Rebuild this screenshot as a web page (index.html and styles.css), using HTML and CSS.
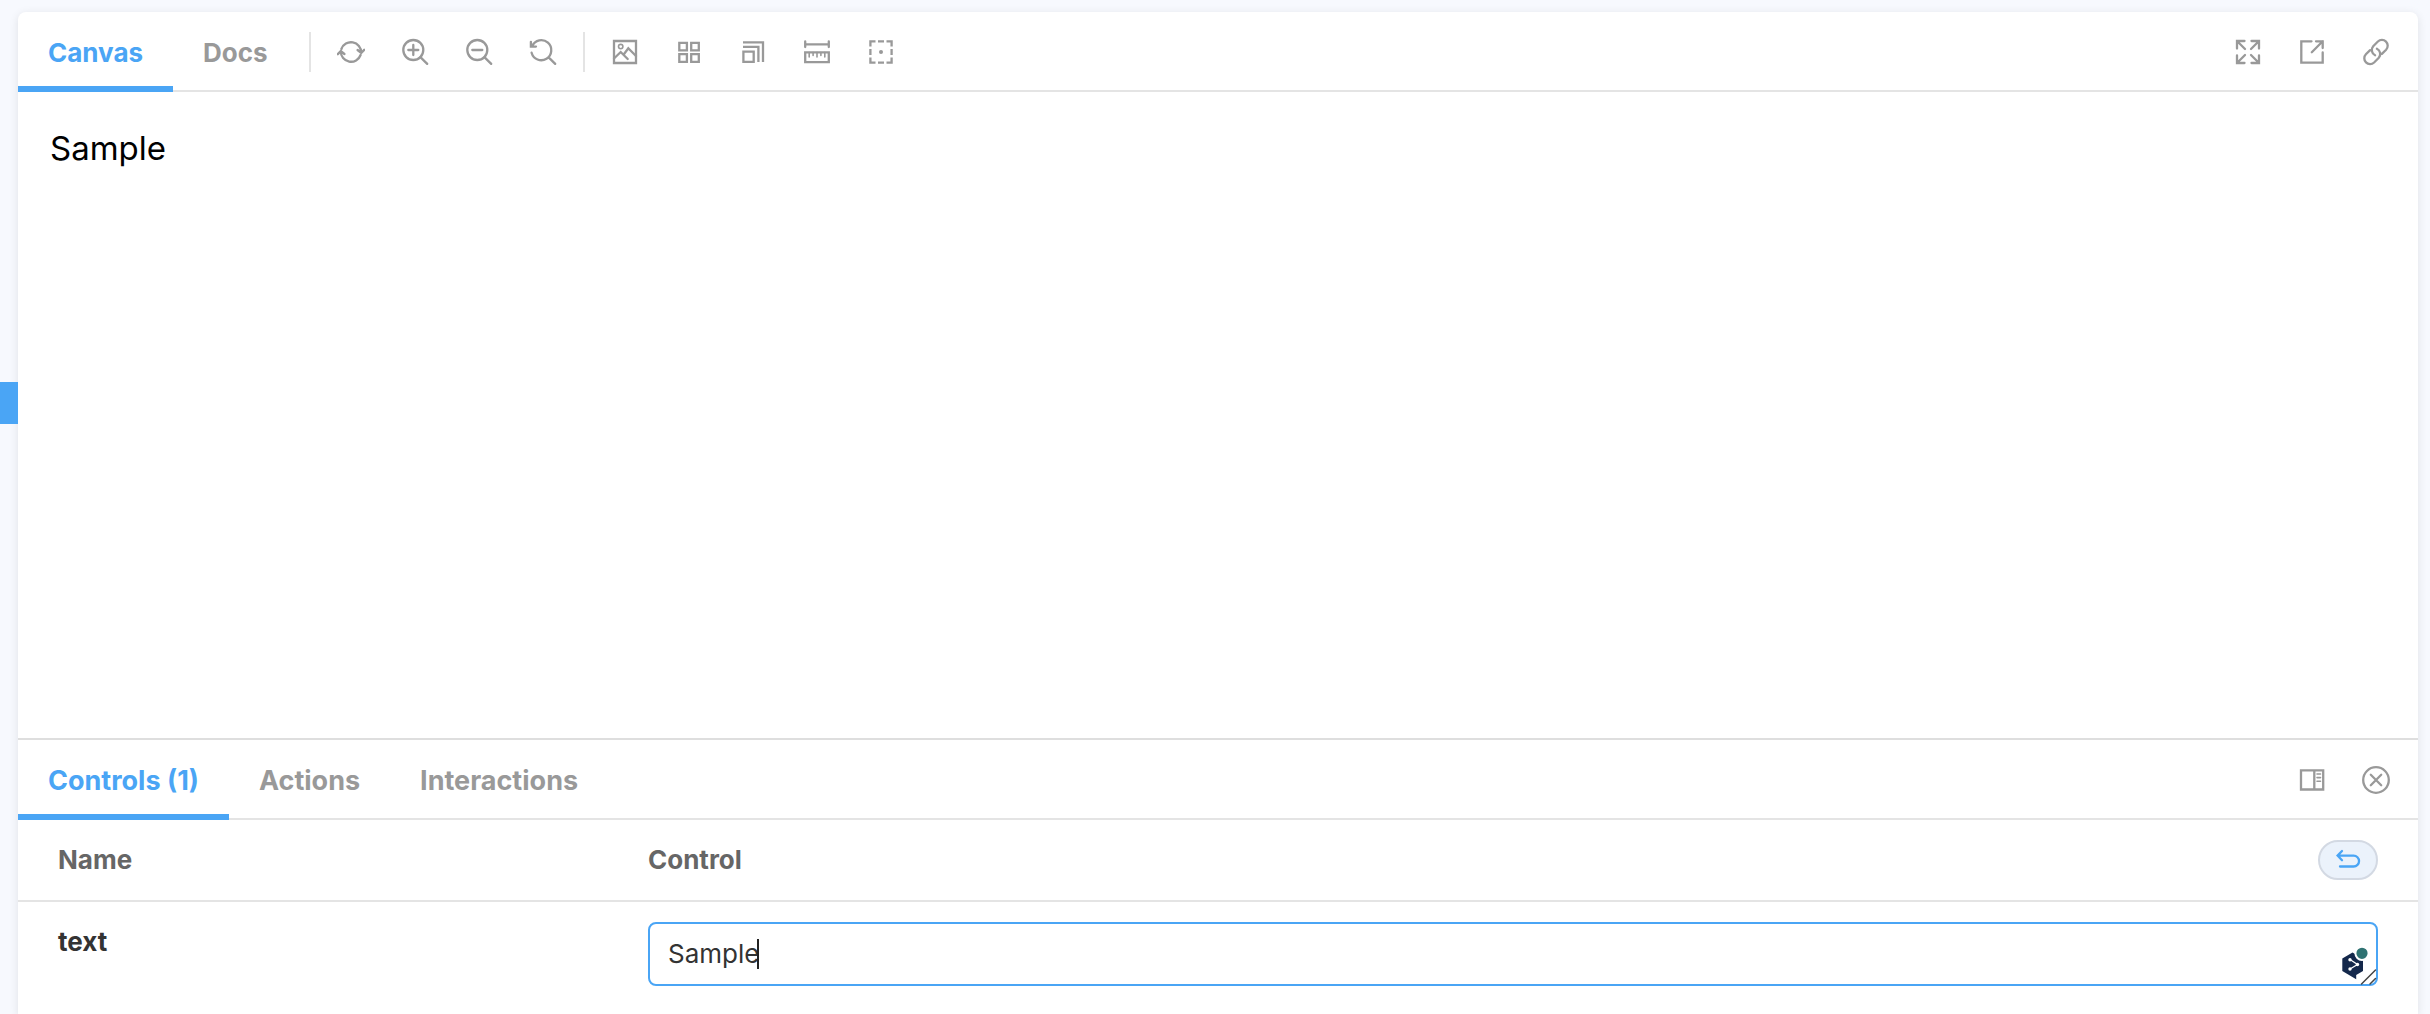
FILE: index.html
```html
<!DOCTYPE html>
<html lang="en">
<head>
<meta charset="utf-8">
<title>Storybook</title>
<link rel="stylesheet" href="styles.css">
</head>
<body>
<aside class="sidebar"><a class="sidebar-selected" href="#story" aria-label="Selected story"></a></aside>
<main class="panel">
  <header class="toolbar">
    <nav class="tabs">
      <button class="tab tab-active">Canvas</button>
      <button class="tab">Docs</button>
    </nav>
    <span class="separator separator-first"></span>
    <div class="tools">
      <button class="tool" aria-label="Remount"><svg viewBox="0 0 28 28"><path d="M4.4 11A10.2 10.2 0 0 1 24.2 14.6M20.6 12l3.6 3 3-3.2M23.6 17A10.2 10.2 0 0 1 3.8 13.4M7.4 16l-3.6-3-3 3.2"/></svg></button>
      <button class="tool" aria-label="Zoom in"><svg viewBox="0 0 28 28"><circle cx="12.3" cy="12" r="10"/><path d="M19.4 19.1l6.8 6.8M7.3 12h10M12.3 7v10"/></svg></button>
      <button class="tool" aria-label="Zoom out"><svg viewBox="0 0 28 28"><circle cx="12.3" cy="12" r="10"/><path d="M19.4 19.1l6.8 6.8M7.3 12h10"/></svg></button>
      <button class="tool" aria-label="Reset zoom"><svg viewBox="0 0 28 28"><path d="M2.6 14.7A10 10 0 1 0 3.2 8M1.9 3.8V8.6H7M19.4 19.1l6.8 6.8"/></svg></button>
    </div>
    <span class="separator"></span>
    <div class="tools">
      <button class="tool" aria-label="Background"><svg viewBox="0 0 28 28"><path d="M3 3H25V25H3Z"/><circle class="thin" cx="9.7" cy="8.6" r="2.2"/><path d="M3 20.5L9.7 14l7 7M12.7 16.5L17.3 10.3 25 18"/></svg></button>
      <button class="tool" aria-label="Grid"><svg viewBox="0 0 28 28"><path d="M4.3 4.8h7.6v7.6H4.3ZM16.2 4.8h7.6v7.6h-7.6ZM4.3 16.2h7.6v7.6H4.3ZM16.2 16.2h7.6v7.6h-7.6Z"/></svg></button>
      <button class="tool" aria-label="Viewport"><svg viewBox="0 0 28 28"><path class="square" d="M4 4.3H24V24M4 8.8H19.4V24M4.4 13.6h10.3v10.2H4.4Z"/></svg></button>
      <button class="tool" aria-label="Measure"><svg viewBox="0 0 28 28"><path d="M2.2 6.3H25.8M2.2 3.5v5.6M25.8 3.5v5.6M2.2 14.3H25.8V24.2H2.2Z"/><path class="thin" d="M6.2 14.5v4.5M10.1 14.5v3M14 14.5v4.5M17.9 14.5v3M21.8 14.5v4.5"/></svg></button>
      <button class="tool" aria-label="Outline"><svg viewBox="0 0 28 28"><path class="square" d="M3.4 8.5V3.4H8.5M19.5 3.4h5.1V8.5M24.6 19.5v5.1H19.5M8.5 24.6H3.4V19.5M11 3.4h6M11 24.6h6M3.4 11v6M24.6 11v6"/><circle class="dot" cx="14" cy="14" r="2"/></svg></button>
    </div>
    <div class="tools tools-end">
      <button class="tool" aria-label="Full screen"><svg viewBox="0 0 28 28"><path d="M3 10.5V3H10.5M3 3l8 8M17.5 3H25V10.5M25 3l-8 8M25 17.5V25H17.5M25 25l-8-8M10.5 25H3V17.5M3 25l8-8"/></svg></button>
      <button class="tool" aria-label="Open in new tab"><svg viewBox="0 0 28 28"><path d="M13.5 3.3H3.3V24.7H24.7V14.5M18 3.3H24.7V10M13.8 14.2L24.7 3.3"/></svg></button>
      <button class="tool" aria-label="Copy link"><svg viewBox="0 0 28 28"><path d="M19.9 15.9L24.1 11.7A5.8 5.8 0 0 0 15.9 3.5L11.2 8.2A5.8 5.8 0 0 0 13.1 17.2M8.1 12.1L3.9 16.3A5.8 5.8 0 0 0 12.1 24.5L16.8 19.8A5.8 5.8 0 0 0 14.9 10.8"/></svg></button>
    </div>
  </header>
  <section class="canvas">Sample</section>
  <section class="addons">
    <header class="toolbar">
      <nav class="tabs">
        <button class="tab tab-active">Controls (1)</button>
        <button class="tab">Actions</button>
        <button class="tab">Interactions</button>
      </nav>
      <div class="tools tools-end">
        <button class="tool" aria-label="Change orientation"><svg viewBox="0 0 28 28"><path d="M3 4.3H25.2V23.5H3ZM16.3 4.3V23.5"/><path class="thin" d="M19 8h3.5M19 11.6h3.5M19 15.2h3.5"/></svg></button>
        <button class="tool" aria-label="Hide addons"><svg viewBox="0 0 28 28"><circle cx="14" cy="14" r="12.8"/><path d="M8.8 8.8l10.4 10.4M19.2 8.8L8.8 19.2"/></svg></button>
      </div>
    </header>
    <table class="controls">
      <thead>
        <tr>
          <th class="name">Name</th>
          <th><div class="control-head">Control<button class="reset" aria-label="Reset controls"><svg viewBox="0 0 28 28"><path d="M8 5L3.6 9.6 8 14.2M3.6 9.6H19.6A5.4 5.4 0 0 1 19.6 20.5H6"/></svg></button></div></th>
        </tr>
      </thead>
      <tbody>
        <tr>
          <td class="name"><label for="text-control">text</label></td>
          <td>
            <div class="field">
              <textarea id="text-control" rows="1">Sample</textarea>
              <span class="caret"></span>
              <svg class="field-marks" viewBox="0 0 40 40"><path fill="#14284b" d="M14.5 6.5L4.3 12.5V25L18.2 33.3V29L25 25V12.5Z"/><path fill="none" stroke="#fff" stroke-width="1.3" d="M12 13.5L19.5 18.5 12 23"/><g fill="#fff"><circle cx="12" cy="13.8" r="1.7"/><circle cx="19.5" cy="18.5" r="1.7"/><circle cx="12" cy="23" r="1.7"/></g><circle cx="24" cy="7.3" r="6.6" fill="#2f7272" stroke="#fff" stroke-width="2"/><path fill="none" stroke="#444" stroke-width="1.5" d="M23.5 38L37.5 24M32 38l5.5-5.5"/></svg>
            </div>
          </td>
        </tr>
      </tbody>
    </table>
  </section>
</main>
</body>
</html>
```
FILE: styles.css
```css
* {
  box-sizing: border-box;
}

body {
  display: flex;
  min-height: 100vh;
  margin: 0;
  background: #f7f9fe;
  color: #333;
  font-family: Inter, "Liberation Sans", sans-serif;
  font-size: 26px;
  line-height: 32px;
}

button,
textarea {
  margin: 0;
  font: inherit;
}

button {
  padding: 0;
  border: 0;
  background: none;
}

svg {
  display: block;
  width: 28px;
  height: 28px;
  fill: none;
  stroke: currentColor;
  stroke-width: 2.3;
  stroke-linecap: round;
}

.thin {
  stroke-width: 1.6;
}

.square {
  stroke-linecap: butt;
}

.dot {
  fill: currentColor;
  stroke: none;
}

.sidebar {
  position: relative;
  z-index: 1;
  flex: 0 0 18px;
  padding-top: 382px;
}

.sidebar-selected {
  display: block;
  height: 42px;
  background: #4aa5f5;
}

.panel {
  display: flex;
  flex: 1;
  flex-direction: column;
  margin: 12px 12px 0 0;
  border-radius: 8px 8px 0 0;
  background: #fff;
  box-shadow: 0 2px 10px rgba(0, 0, 0, 0.1);
}

.toolbar {
  display: flex;
  align-items: center;
  height: 80px;
  box-shadow: inset 0 -2px #e4e4e4;
}

.tabs {
  display: flex;
  align-self: stretch;
}

.tab {
  padding: 8px 30px 0;
  border-bottom: 6px solid transparent;
  color: #999;
  font-weight: 700;
}

.addons .tab {
  font-size: 27px;
}

.tab-active {
  border-color: #4aa5f5;
  color: #4aa5f5;
}

.separator {
  width: 2px;
  height: 40px;
  background: #e4e4e4;
}

.separator-first {
  margin-left: 11px;
}

.tools {
  display: flex;
  gap: 36px;
  padding: 0 26px;
}

.tools-end {
  margin-left: auto;
  padding-right: 28px;
}

.tool {
  color: #999;
}

.canvas {
  flex: 1;
  padding: 36px 32px;
  color: #000;
  font-size: 33px;
  line-height: 40px;
}

.addons {
  border-top: 2px solid #dedede;
}

.controls {
  width: 100%;
  border-collapse: separate;
  border-spacing: 0;
  table-layout: fixed;
}

.controls th {
  height: 82px;
  padding: 0 40px 0 30px;
  border-bottom: 2px solid #e4e4e4;
  color: #666;
  font-weight: 700;
  text-align: left;
}

.controls td {
  padding: 20px 40px 28px 30px;
  vertical-align: top;
  font-weight: 700;
}

.controls .name {
  width: 25%;
  padding-left: 40px;
}

.controls label {
  display: block;
  margin-top: 4px;
}

.control-head {
  display: flex;
  align-items: center;
  justify-content: space-between;
}

.reset {
  display: flex;
  align-items: center;
  justify-content: center;
  width: 60px;
  height: 40px;
  border: 2px solid #d3d9e3;
  border-radius: 20px;
  background: #ebf2fb;
  color: #4aa5f5;
}

.field {
  position: relative;
}

.field textarea {
  display: block;
  width: 100%;
  height: 64px;
  padding: 14px 18px;
  overflow: hidden;
  border: 2px solid #4aa5f5;
  border-radius: 8px;
  outline: 0;
  background: #fff;
  color: #333;
  font-weight: 400;
  resize: none;
}

.caret {
  position: absolute;
  top: 17px;
  left: 109px;
  width: 2px;
  height: 30px;
  background: #222;
}

.field-marks {
  position: absolute;
  right: 0;
  bottom: 0;
  width: 40px;
  height: 40px;
  stroke: none;
}
```
